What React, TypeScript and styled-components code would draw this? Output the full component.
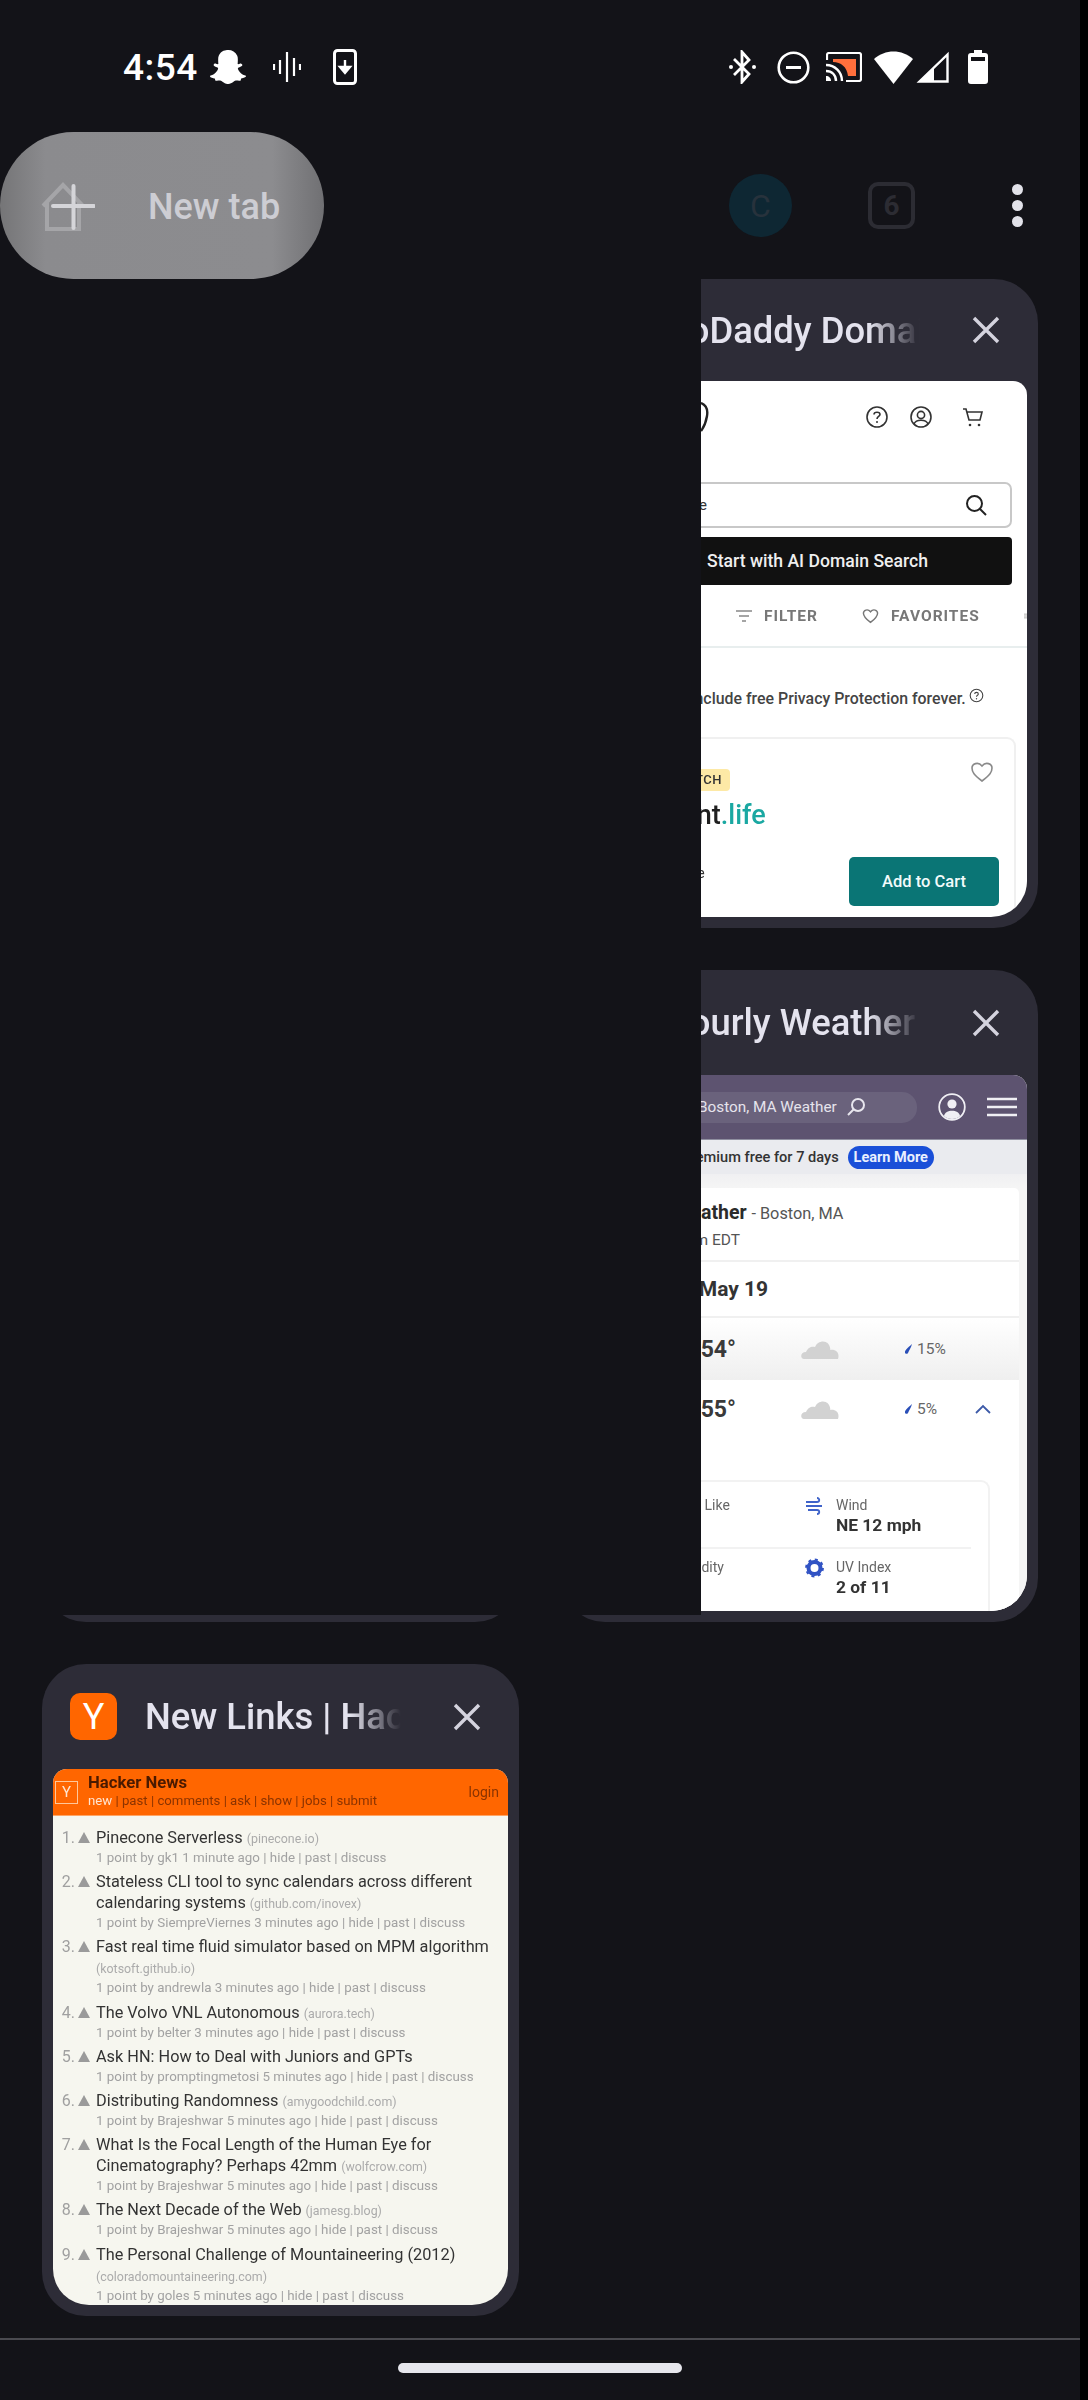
import React from 'react';
import styled, { createGlobalStyle } from 'styled-components';
import { FaSnapchatGhost } from 'react-icons/fa';

const GlobalStyle = createGlobalStyle`
  html, body {
    margin: 0;
    padding: 0;
    background: #000;
  }
  * {
    box-sizing: border-box;
  }
`;

const Screen = styled.div`
  position: relative;
  width: 1080px;
  height: 2400px;
  overflow: hidden;
  background: #131318;
  font-family: Roboto, "Liberation Sans", sans-serif;
`;

const StatusBar = styled.div`
  display: flex;
  align-items: center;
  height: 132px;
  padding: 2px 92px 0 123px;
  color: #fff;
`;

const Clock = styled.span`
  font-size: 37px;
  font-weight: 500;
  letter-spacing: 0.5px;
  width: 87px;
`;

const StatusLeft = styled.div`
  display: flex;
  align-items: center;
  gap: 28px;
`;

const StatusRight = styled.div`
  display: flex;
  align-items: center;
  margin-left: auto;
`;

const Toolbar = styled.div`
  display: flex;
  align-items: center;
  height: 147px;
`;

const NewTabPill = styled.div`
  display: flex;
  align-items: center;
  width: 324px;
  height: 147px;
  padding: 3px 0 0 41px;
  border-radius: 74px;
  background: linear-gradient(90deg, #757577 0%, #8b8b8e 14%, #8c8c8f 84%, #707073 100%);
`;

const NewTabLabel = styled.span`
  margin-left: 53px;
  font-size: 36px;
  font-weight: 500;
  color: #cdcdd3;
`;

const Avatar = styled.div`
  display: flex;
  align-items: center;
  justify-content: center;
  width: 63px;
  height: 63px;
  margin-left: 405px;
  border-radius: 50%;
  background: #0e2733;
  color: #27323c;
  font-size: 32px;
`;

const TabCount = styled.div`
  display: flex;
  align-items: center;
  justify-content: center;
  width: 47px;
  height: 47px;
  margin-left: 76px;
  border: 4px solid #2c2c33;
  border-radius: 10px;
  color: #2c2c33;
  font-size: 28px;
  font-weight: 700;
`;

const MenuDots = styled.div`
  display: flex;
  flex-direction: column;
  gap: 5px;
  margin-left: 97px;
`;

const Dot = styled.i`
  display: block;
  width: 11px;
  height: 11px;
  border-radius: 50%;
  background: #e2e2e9;
`;

const TabGrid = styled.div`
  display: grid;
  grid-template-columns: 477px 477px;
  grid-template-rows: 649px 652px 652px;
  column-gap: 42px;
  row-gap: 42px;
  padding-left: 42px;
`;

const Card = styled.div`
  display: flex;
  flex-direction: column;
  height: 100%;
  padding: 0 11px 11px;
  border-radius: 44px;
  background: #2d2c37;
`;

const CardHead = styled.div<{ $h: number }>`
  display: flex;
  align-items: center;
  flex: none;
  height: ${(p) => p.$h}px;
  padding: 0 0 0 17px;
`;

const Favicon = styled.div`
  display: flex;
  align-items: center;
  justify-content: center;
  flex: none;
  width: 47px;
  height: 47px;
  border-radius: 10px;
  background: #ff6600;
  color: #fff;
  font-size: 36px;
`;

const CardTitle = styled.div`
  flex: none;
  width: 256px;
  margin-left: 28px;
  overflow: hidden;
  white-space: nowrap;
  font-size: 36.4px;
  font-weight: 500;
  color: #e4e3ee;
  -webkit-mask-image: linear-gradient(90deg, #000 80%, transparent 100%);
  mask-image: linear-gradient(90deg, #000 80%, transparent 100%);
`;

const CloseIcon = styled.svg`
  flex: none;
  width: 28px;
  height: 28px;
  margin-left: 52px;
`;

const Thumb = styled.div<{ $bg: string }>`
  flex: 1;
  min-height: 0;
  position: relative;
  overflow: hidden;
  border-radius: 14px 14px 36px 36px;
  background: ${(p) => p.$bg};
  filter: blur(0.45px);
`;

const DragCover = styled.div`
  position: absolute;
  left: 0;
  top: 279px;
  width: 701px;
  height: 1336px;
  background: #131318;
`;

const BottomBar = styled.div`
  margin-top: 22px;
  height: 2px;
  background: #4a4a50;
`;

const HomeHandle = styled.div`
  width: 284px;
  height: 10px;
  margin: 23px 0 0 398px;
  border-radius: 5px;
  background: #e6e6ec;
`;

/* GoDaddy thumbnail */
const GdTop = styled.div`
  display: flex;
  align-items: center;
  height: 72px;
  padding-left: 129px;
`;

const GdLogo = styled.svg`
  width: 8px;
  height: 30px;
`;

const GdIcons = styled.div`
  display: flex;
  align-items: center;
  margin-left: 156px;
  gap: 20px;
`;

const GdSearch = styled.div`
  display: flex;
  align-items: center;
  height: 46px;
  margin: 29px 15px 0 12px;
  padding: 0 22px 0 0;
  border: 2px solid #c8c8c8;
  border-radius: 7px;
  font-size: 15px;
  color: #333;
`;

const GdSearchText = styled.span`
  width: 121px;
  text-align: right;
  white-space: nowrap;
`;

const GdAiButton = styled.div`
  display: flex;
  align-items: center;
  height: 48px;
  margin: 9px 15px 0 12px;
  padding-left: 123px;
  border-radius: 4px;
  background: #111;
  color: #efefef;
  font-size: 17.6px;
  font-weight: 500;
`;

const GdTabs = styled.div`
  display: flex;
  align-items: center;
  height: 63px;
  padding: 0 0 0 164px;
  border-bottom: 2px solid #e8eeee;
  color: #777;
  font-size: 15.5px;
  font-weight: 700;
  letter-spacing: 1px;
  white-space: nowrap;
`;

const GdTab = styled.span<{ $w: number }>`
  display: flex;
  align-items: center;
  gap: 12px;
  flex: none;
  width: ${(p) => p.$w}px;
`;

const GdNote = styled.div`
  display: flex;
  align-items: center;
  gap: 3px;
  margin-top: 41px;
  padding-left: 118px;
  font-size: 15.9px;
  font-weight: 500;
  color: #444;
  white-space: nowrap;
`;

const GdResult = styled.div`
  position: relative;
  margin: 29px 11px 0 12px;
  height: 200px;
  padding: 30px 0 0 0;
  border: 2px solid #f0f0f0;
  border-bottom: none;
  border-radius: 9px;
`;

const GdBadge = styled.span`
  display: block;
  width: 144px;
  height: 22px;
  padding-right: 8px;
  border-radius: 4px;
  background: #fde9a6;
  color: #333;
  font-size: 13px;
  font-weight: 500;
  line-height: 22px;
  letter-spacing: 0.5px;
  text-align: right;
`;

const GdDomain = styled.div`
  padding-left: 34px;
  margin-top: 8px;
  font-size: 27px;
  font-weight: 500;
  color: #1f1f1f;
  white-space: nowrap;
`;

const GdTld = styled.span`
  color: #1aa8a2;
`;

const GdHeart = styled.svg`
  position: absolute;
  right: 20px;
  top: 21px;
  width: 24px;
  height: 24px;
`;

const GdCart = styled.div`
  position: absolute;
  right: 15px;
  top: 118px;
  display: flex;
  align-items: center;
  justify-content: center;
  width: 150px;
  height: 49px;
  border-radius: 5px;
  background: #0a7575;
  color: #f2fbfb;
  font-size: 16.5px;
  font-weight: 500;
`;

const GdPrice = styled.span`
  position: absolute;
  left: 87px;
  top: 126px;
  font-size: 14px;
  color: #333;
`;

/* weather thumbnail */
const WxHeader = styled.div`
  display: flex;
  align-items: center;
  height: 65px;
  padding-left: 100px;
  border-bottom: 1px solid #8f8fa0;
  background: #5d5370;
`;

const WxSearch = styled.div`
  display: flex;
  align-items: center;
  gap: 9px;
  width: 245px;
  height: 31px;
  padding-left: 26px;
  border-radius: 15px;
  background: #6a627c;
  color: #e6e4ec;
  font-size: 15.3px;
  white-space: nowrap;
`;

const WxPromo = styled.div`
  display: flex;
  align-items: center;
  gap: 9px;
  height: 34px;
  padding-left: 85px;
  background: #eaebef;
  color: #333;
  font-size: 14.6px;
  font-weight: 500;
  white-space: nowrap;
`;

const WxLearn = styled.span`
  display: flex;
  align-items: center;
  justify-content: center;
  flex: none;
  width: 86px;
  height: 23px;
  border-radius: 12px;
  background: #1a4fd8;
  color: #e9efff;
  font-size: 14.5px;
  font-weight: 700;
`;

const WxBody = styled.div`
  height: 437px;
  padding: 14px 8px 0 0;
  background: linear-gradient(180deg, #f0f0f2 0, #f5f5f5 14px);
`;

const WxPanel = styled.div`
  height: 100%;
  border-radius: 5px 5px 0 0;
  background: #fff;
  color: #333;
`;

const WxHead = styled.div`
  height: 74px;
  padding: 13px 0 0 39px;
  border-bottom: 2px solid #f0f0f0;
  white-space: nowrap;
`;

const WxHeadline = styled.div`
  font-size: 19.5px;
  font-weight: 700;
  color: #2b2b2b;

  small {
    font-size: 16.3px;
    font-weight: 400;
    color: #555;
  }
`;

const WxSub = styled.div`
  margin: 7px 0 0 1px;
  font-size: 15.5px;
  color: #555;
`;

const WxDate = styled.div`
  display: flex;
  align-items: center;
  height: 56px;
  padding-left: 48px;
  border-bottom: 2px solid #f0f0f0;
  font-size: 21px;
  font-weight: 700;
  color: #333;
`;

const WxHour = styled.div<{ $shaded?: boolean; $h: number; $pad?: number }>`
  display: grid;
  grid-template-columns: 164px 168px 71px 30px;
  align-items: center;
  height: ${(p) => p.$h}px;
  padding-bottom: ${(p) => p.$pad ?? 0}px;
  background: ${(p) => (p.$shaded ? 'linear-gradient(180deg, #fff, #efefef)' : '#fff')};
`;

const WxTemp = styled.span`
  justify-self: end;
  font-size: 23px;
  font-weight: 700;
  color: #3a3a3a;
`;

const WxCloud = styled.svg`
  justify-self: center;
  width: 38px;
  height: 20px;
`;

const WxRain = styled.span`
  display: flex;
  align-items: center;
  gap: 3px;
  font-size: 15.5px;
  color: #666;
  white-space: nowrap;
`;

const WxDetails = styled.div`
  height: 140px;
  margin: 0 29px 0 0;
  padding: 14px 17px 0 0;
  border: 2px solid #f2f2f2;
  border-bottom: none;
  border-radius: 9px 9px 0 0;
`;

const WxDetailRow = styled.div`
  display: grid;
  grid-template-columns: 231px 1fr;
  height: 53px;
  margin-bottom: 9px;
  border-bottom: 2px solid #f2f2f2;

  &:last-child {
    border-bottom: none;
  }
`;

const WxLabel = styled.div`
  font-size: 14px;
  line-height: 19px;
  color: #666;
`;

const WxSideLabel = styled(WxLabel)`
  padding-left: 94px;
`;

const WxValue = styled.div`
  font-size: 17.4px;
  font-weight: 700;
  line-height: 20px;
  color: #333;
`;

const WxMetric = styled.div`
  display: flex;
  gap: 12px;
`;

/* hacker news thumbnail */
const HnHeader = styled.div`
  display: flex;
  align-items: center;
  height: 47px;
  padding: 0 9px 0 2px;
  border-bottom: 1px solid #ffa565;
  background: #ff6600;
`;

const HnLogo = styled.span`
  display: flex;
  align-items: center;
  justify-content: center;
  flex: none;
  width: 23px;
  height: 23px;
  border: 1px solid #ffc79a;
  color: #ffe5d0;
  font-size: 15px;
`;

const HnHeadText = styled.div`
  margin-left: 10px;
  flex: 1;
`;

const HnBrand = styled.div`
  font-size: 16.7px;
  line-height: 18px;
  font-weight: 700;
  color: #4a1a00;
`;

const HnNav = styled.div`
  font-size: 13.2px;
  line-height: 18px;
  color: #8a3300;

  b {
    font-weight: 400;
    color: #ffe4d0;
  }
`;

const HnLogin = styled.span`
  font-size: 14px;
  color: #8a3300;
`;

const HnList = styled.div`
  padding: 11px 0 0 0;
`;

const HnItem = styled.div`
  display: grid;
  grid-template-columns: 22px 21px 1fr;
  column-gap: 0;
  padding-bottom: 3.2px;
`;

const HnRank = styled.span`
  justify-self: end;
  font-size: 16px;
  line-height: 21px;
  color: #a0a0a0;
`;

const HnArrow = styled.span`
  justify-self: start;
  width: 0;
  height: 0;
  margin: 5px 0 0 3px;
  border-left: 6px solid transparent;
  border-right: 6px solid transparent;
  border-bottom: 11px solid #9a9a9a;
`;

const HnBody = styled.div`
  min-width: 0;
`;

const HnTitle = styled.div`
  font-size: 16.3px;
  line-height: 21px;
  color: #333;

  small {
    font-size: 12.4px;
    line-height: 1;
    color: #ababab;
  }
`;

const HnMeta = styled.div`
  font-size: 13.35px;
  line-height: 20px;
  color: #a2a2a2;
  white-space: nowrap;
`;

const hnItems = [
  { title: 'Pinecone Serverless', site: 'pinecone.io', meta: '1 point by gk1 1 minute ago | hide | past | discuss' },
  { title: 'Stateless CLI tool to sync calendars across different calendaring systems', site: 'github.com/inovex', meta: '1 point by SiempreViernes 3 minutes ago | hide | past | discuss' },
  { title: 'Fast real time fluid simulator based on MPM algorithm', site: 'kotsoft.github.io', meta: '1 point by andrewla 3 minutes ago | hide | past | discuss' },
  { title: 'The Volvo VNL Autonomous', site: 'aurora.tech', meta: '1 point by belter 3 minutes ago | hide | past | discuss' },
  { title: 'Ask HN: How to Deal with Juniors and GPTs', site: '', meta: '1 point by promptingmetosi 5 minutes ago | hide | past | discuss' },
  { title: 'Distributing Randomness', site: 'amygoodchild.com', meta: '1 point by Brajeshwar 5 minutes ago | hide | past | discuss' },
  { title: 'What Is the Focal Length of the Human Eye for Cinematography? Perhaps 42mm', site: 'wolfcrow.com', meta: '1 point by Brajeshwar 5 minutes ago | hide | past | discuss' },
  { title: 'The Next Decade of the Web', site: 'jamesg.blog', meta: '1 point by Brajeshwar 5 minutes ago | hide | past | discuss' },
  { title: 'The Personal Challenge of Mountaineering (2012)', site: 'coloradomountaineering.com', meta: '1 point by goles 5 minutes ago | hide | past | discuss' },
];

const Close = () => (
  <CloseIcon viewBox="0 0 28 28">
    <path d="M2 2 L26 26 M26 2 L2 26" stroke="#d4d3de" strokeWidth="3.4" fill="none" />
  </CloseIcon>
);

const Cloud = () => (
  <WxCloud viewBox="0 0 38 20">
    <path d="M3 20 C-1 20 -1 13 5 13 C7 8 11 7 14 8 C16 2 25 0 28 6 C30 10 29 11 29 11 C35 10 39 14 37 20 Z" fill="#d2d2d2" />
  </WxCloud>
);

const Drop = () => (
  <svg width="10" height="12" viewBox="0 0 10 12">
    <path d="M8 1 C7 5 5 7 4 10 C3 11.5 0.5 11 1 8.5 C2 6 6 3 8 1 Z" fill="#2a4fb8" />
  </svg>
);

const GoDaddyThumb = () => (
  <Thumb $bg="#fff">
    <GdTop>
      <GdLogo viewBox="0 0 8 30">
        <path d="M0 1 C5 3 7 8 6 14 C5 20 3 25 0 29" stroke="#222" strokeWidth="2.4" fill="none" />
      </GdLogo>
      <GdIcons>
        <svg width="24" height="24" viewBox="0 0 24 24">
          <circle cx="12" cy="12" r="10" stroke="#333" strokeWidth="1.6" fill="none" />
          <path d="M9 9.5 C9 6.5 15 6.5 15 9.5 C15 11.5 12 11.5 12 14" stroke="#333" strokeWidth="1.6" fill="none" />
          <circle cx="12" cy="17" r="1" fill="#333" />
        </svg>
        <svg width="24" height="24" viewBox="0 0 24 24">
          <circle cx="12" cy="12" r="10" stroke="#333" strokeWidth="1.6" fill="none" />
          <circle cx="12" cy="10" r="3.6" stroke="#333" strokeWidth="1.6" fill="none" />
          <path d="M5 19 C7 14 17 14 19 19" stroke="#333" strokeWidth="1.6" fill="none" />
        </svg>
        <svg width="24" height="24" viewBox="0 0 24 24" style={{ marginLeft: 8 }}>
          <path d="M2 4 H5 L8 15 H19 L21 7 H6" stroke="#333" strokeWidth="1.6" fill="none" />
          <circle cx="9" cy="20" r="1.3" fill="#333" />
          <circle cx="18" cy="20" r="1.3" fill="#333" />
        </svg>
      </GdIcons>
    </GdTop>
    <GdSearch>
      <GdSearchText>Enter a name</GdSearchText>
      <svg width="24" height="24" viewBox="0 0 24 24" style={{ marginLeft: 'auto' }}>
        <circle cx="10.5" cy="10.5" r="7.5" stroke="#222" strokeWidth="2" fill="none" />
        <path d="M16 16 L22 22" stroke="#222" strokeWidth="2" />
      </svg>
    </GdSearch>
    <GdAiButton>Start with AI Domain Search</GdAiButton>
    <GdTabs>
      <GdTab $w={126}>
        <svg width="16" height="12" viewBox="0 0 16 12">
          <path d="M0 1 H16 M3 6 H13 M6 11 H10" stroke="#888" strokeWidth="1.5" />
        </svg>
        FILTER
      </GdTab>
      <GdTab $w={162}>
        <svg width="17" height="16" viewBox="0 0 24 22">
          <path d="M12 20 C4 14 2 11 2 7 C2 3 8 0 12 5 C16 0 22 3 22 7 C22 11 20 14 12 20 Z" stroke="#777" strokeWidth="2" fill="none" />
        </svg>
        FAVORITES
      </GdTab>
      <svg width="8" height="14" viewBox="0 0 8 14">
        <path d="M0 2 H8 M0 7 H8 M0 12 H8" stroke="#999" strokeWidth="2" />
      </svg>
    </GdTabs>
    <GdNote>
      Include free Privacy Protection forever.
      <svg width="15" height="15" viewBox="0 0 15 15" style={{ marginTop: -6 }}>
        <circle cx="7.5" cy="7.5" r="6.3" stroke="#444" strokeWidth="1.1" fill="none" />
        <path d="M5.7 6 C5.7 3.8 9.3 3.8 9.3 6 C9.3 7.4 7.5 7.2 7.5 8.8" stroke="#444" strokeWidth="1.1" fill="none" />
        <circle cx="7.5" cy="10.8" r="0.7" fill="#444" />
      </svg>
    </GdNote>
    <GdResult>
      <GdBadge>BEST MATCH</GdBadge>
      <GdDomain>
        moment<GdTld>.life</GdTld>
      </GdDomain>
      <GdPrice>Price</GdPrice>
      <GdHeart viewBox="0 0 24 22">
        <path d="M12 20 C4 14 2 11 2 7 C2 3 8 0 12 5 C16 0 22 3 22 7 C22 11 20 14 12 20 Z" stroke="#8a8a8a" strokeWidth="1.6" fill="none" />
      </GdHeart>
      <GdCart>Add to Cart</GdCart>
    </GdResult>
  </Thumb>
);

const WeatherThumb = () => (
  <Thumb $bg="#fff">
    <WxHeader>
      <WxSearch>
        Boston, MA Weather
        <svg width="20" height="20" viewBox="0 0 20 20">
          <circle cx="12" cy="8" r="6" stroke="#e8e6ee" strokeWidth="2" fill="none" />
          <path d="M8 12 L2 18" stroke="#e8e6ee" strokeWidth="2" />
        </svg>
      </WxSearch>
      <svg width="28" height="28" viewBox="0 0 28 28" style={{ marginLeft: 21 }}>
        <circle cx="14" cy="14" r="12.8" stroke="#f0eff4" strokeWidth="1.8" fill="none" />
        <circle cx="14" cy="11" r="4.6" fill="#f0eff4" />
        <path d="M6 23 C7 16 21 16 22 23 C18 27 10 27 6 23 Z" fill="#f0eff4" />
      </svg>
      <svg width="30" height="20" viewBox="0 0 30 20" style={{ marginLeft: 21 }}>
        <path d="M0 2 H30 M0 10 H30 M0 18 H30" stroke="#f0eff4" strokeWidth="2.4" />
      </svg>
    </WxHeader>
    <WxPromo>
      Try Premium free for 7 days
      <WxLearn>Learn More</WxLearn>
    </WxPromo>
    <WxBody>
      <WxPanel>
        <WxHead>
          <WxHeadline>
            Hourly Weather <small>- Boston, MA</small>
          </WxHeadline>
          <WxSub>As of 4:53 pm EDT</WxSub>
        </WxHead>
        <WxDate>Sunday, May 19</WxDate>
        <WxHour $shaded $h={62}>
          <WxTemp>54°</WxTemp>
          <Cloud />
          <WxRain>
            <Drop />
            15%
          </WxRain>
        </WxHour>
        <WxHour $h={100} $pad={42}>
          <WxTemp>55°</WxTemp>
          <Cloud />
          <WxRain>
            <Drop />
            5%
          </WxRain>
          <svg width="16" height="10" viewBox="0 0 16 10">
            <path d="M1 9 L8 2 L15 9" stroke="#3d5aa8" strokeWidth="1.8" fill="none" />
          </svg>
        </WxHour>
        <WxDetails>
          <WxDetailRow>
            <WxSideLabel>Feels Like</WxSideLabel>
            <WxMetric>
              <svg width="19" height="20" viewBox="0 0 19 20">
                <path d="M1 6 H12 C15 6 15 2 12 2 M1 10 H17 M3 14 H12 C15 14 15 18 12 18" stroke="#3f63c9" strokeWidth="1.8" fill="none" />
              </svg>
              <div>
                <WxLabel>Wind</WxLabel>
                <WxValue>NE 12 mph</WxValue>
              </div>
            </WxMetric>
          </WxDetailRow>
          <WxDetailRow>
            <WxSideLabel>Humidity</WxSideLabel>
            <WxMetric>
              <svg width="19" height="20" viewBox="0 0 19 20">
                <circle cx="9.5" cy="10" r="6" stroke="#3153c4" strokeWidth="4" fill="none" />
                <circle cx="9.5" cy="10" r="8.4" stroke="#3153c4" strokeWidth="2" strokeDasharray="3 3.6" fill="none" />
              </svg>
              <div>
                <WxLabel>UV Index</WxLabel>
                <WxValue>2 of 11</WxValue>
              </div>
            </WxMetric>
          </WxDetailRow>
        </WxDetails>
      </WxPanel>
    </WxBody>
  </Thumb>
);

const HackerNewsThumb = () => (
  <Thumb $bg="#f6f6ef">
    <HnHeader>
      <HnLogo>Y</HnLogo>
      <HnHeadText>
        <HnBrand>Hacker News</HnBrand>
        <HnNav>
          <b>new</b> | past | comments | ask | show | jobs | submit
        </HnNav>
      </HnHeadText>
      <HnLogin>login</HnLogin>
    </HnHeader>
    <HnList>
      {hnItems.map((item, i) => (
        <HnItem key={item.title}>
          <HnRank>{i + 1}.</HnRank>
          <HnArrow />
          <HnBody>
            <HnTitle>
              {item.title} {item.site && <small>({item.site})</small>}
            </HnTitle>
            <HnMeta>{item.meta}</HnMeta>
          </HnBody>
        </HnItem>
      ))}
    </HnList>
  </Thumb>
);

const App: React.FC = () => (
  <>
    <GlobalStyle />
    <Screen>
      <StatusBar>
        <Clock>4:54</Clock>
        <StatusLeft>
          <FaSnapchatGhost size={36} color="#fff" />
          <svg width="28" height="30" viewBox="0 0 28 30" style={{ marginLeft: -1 }}>
            <path d="M1 12 V18 M7 8 V22 M14 0 V30 M21 6 V24 M27 12 V18" stroke="#fff" strokeWidth="2.2" />
          </svg>
          <svg width="24" height="36" viewBox="0 0 24 36" style={{ marginLeft: 4 }}>
            <rect x="1.5" y="1.5" width="21" height="33" rx="3" stroke="#fff" strokeWidth="3" fill="none" />
            <path d="M12 11 V23 M7 18 L12 24 L17 18 Z" stroke="#fff" strokeWidth="2.4" fill="#fff" />
          </svg>
        </StatusLeft>
        <StatusRight>
          <svg width="27" height="34" viewBox="0 0 27 34">
            <path d="M5 9 L20 24 L13 32 V2 L20 10 L5 25" stroke="#fff" strokeWidth="2.8" fill="none" />
            <circle cx="2" cy="17" r="2" fill="#fff" />
            <circle cx="25" cy="17" r="2" fill="#fff" />
          </svg>
          <svg width="33" height="33" viewBox="0 0 33 33" style={{ marginLeft: 21 }}>
            <circle cx="16.5" cy="16.5" r="14.8" stroke="#fff" strokeWidth="2.6" fill="none" />
            <path d="M9 16.5 H24" stroke="#fff" strokeWidth="3" />
          </svg>
          <svg width="36" height="30" viewBox="0 0 36 30" style={{ marginLeft: 16 }}>
            <path d="M1 8 V3 C1 2 2 1 3 1 H33 C34 1 35 2 35 3 V27 C35 28 34 29 33 29 H20" stroke="#fff" strokeWidth="2.2" fill="none" />
            <path d="M7 7 H30 V24 H22 C21 15 15 10 7 10 Z" fill="#ff6f3c" />
            <path d="M0 13 C9 13 16 20 16 29 M0 19 C6 19 10 23 10 29" stroke="#fff" strokeWidth="2.4" fill="none" />
            <path d="M0 24 C3 24 5 26 5 29 H0 Z" fill="#fff" />
          </svg>
          <svg width="39" height="33" viewBox="0 0 39 33" style={{ marginLeft: 12 }}>
            <path d="M0 8 C11 -2 28 -2 39 8 L19.5 33 Z" fill="#fff" />
          </svg>
          <svg width="33" height="32" viewBox="0 0 33 32" style={{ marginLeft: 3 }}>
            <path d="M31.5 3.5 V30.5 H3.5 Z" stroke="#fff" strokeWidth="2.4" fill="none" />
            <path d="M18 16.5 V30.5 H3.5 Z" fill="#fff" />
          </svg>
          <svg width="20" height="34" viewBox="0 0 20 34" style={{ marginLeft: 19 }}>
            <path d="M6 0 H14 V3 H17 C19 3 20 4 20 6 V31 C20 33 19 34 17 34 H3 C1 34 0 33 0 31 V6 C0 4 1 3 3 3 H6 Z" fill="#fff" />
            <rect x="3" y="7" width="14" height="4" fill="#131318" />
          </svg>
        </StatusRight>
      </StatusBar>
      <Toolbar>
        <NewTabPill>
          <svg width="54" height="50" viewBox="0 0 54 50" style={{ flex: 'none' }}>
            <path d="M2 24 L22 3 L42 24 M6 21 V47 H38 V21" stroke="#a5a5a8" strokeWidth="4" fill="none" />
            <path d="M12 24 H53 M32.5 4 V46" stroke="#d5d5d9" strokeWidth="4" strokeLinecap="round" fill="none" />
          </svg>
          <NewTabLabel>New tab</NewTabLabel>
        </NewTabPill>
        <Avatar>C</Avatar>
        <TabCount>6</TabCount>
        <MenuDots>
          <Dot />
          <Dot />
          <Dot />
        </MenuDots>
      </Toolbar>
      <TabGrid>
        <Card />
        <Card>
          <CardHead $h={102}>
            <Favicon />
            <CardTitle>GoDaddy Domain Search</CardTitle>
            <Close />
          </CardHead>
          <GoDaddyThumb />
        </Card>
        <Card />
        <Card>
          <CardHead $h={105}>
            <Favicon />
            <CardTitle>Hourly Weather Forecast</CardTitle>
            <Close />
          </CardHead>
          <WeatherThumb />
        </Card>
        <Card>
          <CardHead $h={105}>
            <Favicon>Y</Favicon>
            <CardTitle>New Links | Hacker News</CardTitle>
            <Close />
          </CardHead>
          <HackerNewsThumb />
        </Card>
      </TabGrid>
      <BottomBar />
      <HomeHandle />
      <DragCover />
    </Screen>
  </>
);

export default App;
